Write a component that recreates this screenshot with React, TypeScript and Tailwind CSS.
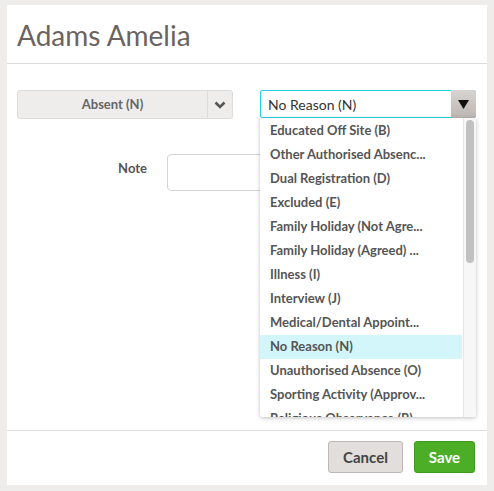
import React from "react";

const items = [
  "Educated Off Site (B)",
  "Other Authorised Absenc...",
  "Dual Registration (D)",
  "Excluded (E)",
  "Family Holiday (Not Agre...",
  "Family Holiday (Agreed) ...",
  "Illness (I)",
  "Interview (J)",
  "Medical/Dental Appoint...",
  "No Reason (N)",
  "Unauthorised Absence (O)",
  "Sporting Activity (Approv...",
  "Religious Observance (R)",
];

export default function App() {
  return (
    <div
      className="w-[494px] h-[491px] bg-[#eeedeb] pt-[5px] pl-[7px] overflow-hidden"
      style={{ fontFamily: "Lato, 'Noto Sans', sans-serif" }}
    >
      <div className="w-[480px] h-[480px] bg-white flex flex-col">
        <div className="h-[59px] border-b border-[#dddddd] px-[10px] flex items-center">
          <h1 className="text-[28px] text-[#6b6360] leading-none pt-[2px]">Adams Amelia</h1>
        </div>
        <div className="flex-1 relative px-[10px] pt-[26px]">
          <div className="flex items-start">
            <div className="w-[216px] h-[29px] flex bg-[#eeedeb] border border-[#dcdcdc] rounded-[3px]">
              <div className="flex-1 flex items-center justify-center text-[13px] font-bold text-[#666]">
                Absent (N)
              </div>
              <div className="w-[25px] border-l border-[#dcdcdc] flex items-center justify-center">
                <svg width="12" height="8" viewBox="0 0 12 8">
                  <path d="M1.5 1.5 L6 6 L10.5 1.5" fill="none" stroke="#555" strokeWidth="2.6" />
                </svg>
              </div>
            </div>
            <div className="ml-[27px] w-[216px] h-[28px] relative">
              <div className="w-full h-full flex border border-[#20d3e4] rounded-[2px]">
                <div className="flex-1 flex items-center pl-[7px] text-[14px] text-[#333]">
                  No Reason (N)
                </div>
                <div className="w-[25px] -my-px -mr-px flex items-center justify-center rounded-r-[3px] bg-gradient-to-b from-[#d8d4d1] to-[#bcb6b2]">
                  <svg width="11" height="9" viewBox="0 0 11 9">
                    <path d="M0 0 L11 0 L5.5 9 Z" fill="#111" />
                  </svg>
                </div>
              </div>
              <div className="absolute left-0 top-[28px] w-[216px] h-[299px] bg-white overflow-hidden shadow-[0_1px_4px_rgba(0,0,0,0.25)] rounded-b-[3px] z-10">
                <div className="pt-px pr-[14px]">
                  {items.map((t) => (
                    <div
                      key={t}
                      className={`h-[24px] flex items-center pl-[10px] text-[13px] font-bold text-[#555] whitespace-nowrap ${
                        t === "No Reason (N)" ? "bg-[#d3f6fb]" : ""
                      }`}
                    >
                      {t}
                    </div>
                  ))}
                </div>
                <div className="absolute right-0 top-0 bottom-0 w-[13px] bg-[#f7f7f7] border-l border-[#e6e6e6]">
                  <div className="ml-[2px] mt-[2px] w-[8px] h-[143px] rounded-full bg-[#c1c1c1]" />
                </div>
              </div>
            </div>
          </div>
          <div className="flex items-start mt-[35px]">
            <div className="w-[130px] text-right text-[13px] font-bold text-[#555] pt-[5px]">Note</div>
            <div className="ml-[20px] w-[300px] h-[37px] border border-[#d4d4d4] rounded-[4px]" />
          </div>
        </div>
        <div className="h-[55px] border-t border-[#dddddd] flex items-start justify-end gap-[11px] pr-[12px] pt-[10px]">
          <button className="w-[75px] h-[32px] bg-[#e2dedc] border border-[#bdb8b5] rounded-[3px] text-[15px] font-bold text-[#444]">
            Cancel
          </button>
          <button className="w-[61px] h-[32px] bg-[#4cae27] border border-[#3f9a20] rounded-[3px] text-[15px] font-bold text-white">
            Save
          </button>
        </div>
      </div>
    </div>
  );
}
